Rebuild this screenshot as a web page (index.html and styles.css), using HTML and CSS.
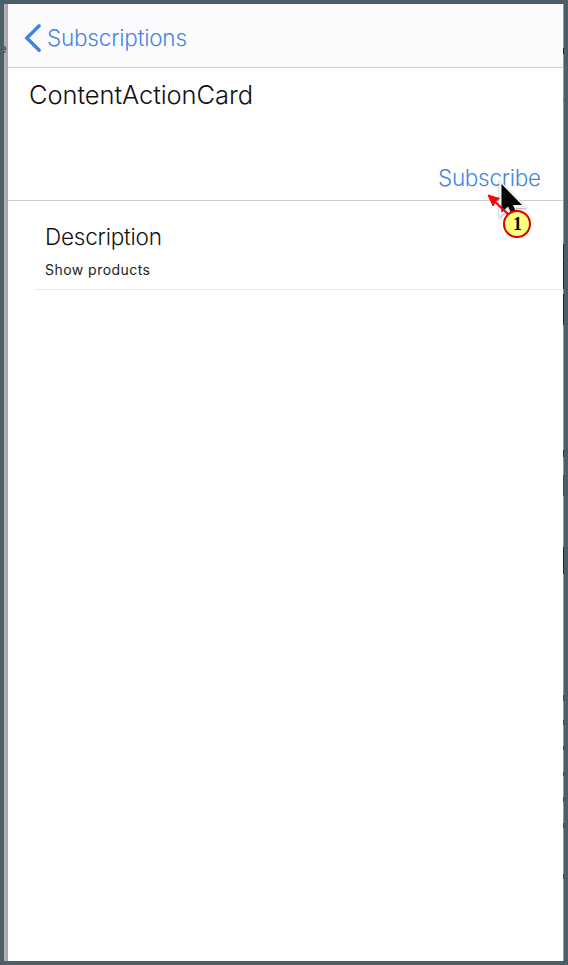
FILE: index.html
```
<!DOCTYPE html>
<html lang="en">
<head>
<meta charset="utf-8">
<title>Subscriptions</title>
<link rel="stylesheet" href="styles.css">
</head>
<body>
<div class="frame">
  <div class="edge-left"><span class="peek">e</span></div>
  <main class="screen">
    <nav class="nav">
      <svg class="chevron" width="18" height="30" viewBox="0 0 18 30"><path d="M15.2 2.7 2.8 15 15.2 27.3" fill="none" stroke="#3f82e8" stroke-width="3.4" stroke-linecap="round" stroke-linejoin="miter"/></svg>
      <svg class="label" width="150" height="36"><text x="0" y="25" textLength="140">Subscriptions</text></svg>
    </nav>
    <header class="card">
      <svg class="title" width="240" height="40"><text x="0" y="28" textLength="224">ContentActionCard</text></svg>
      <svg class="subscribe" width="104" height="36"><text x="1" y="24" textLength="103">Subscribe</text></svg>
    </header>
    <section class="details">
      <svg class="heading" width="140" height="34"><text x="0" y="24" textLength="117">Description</text></svg>
      <svg class="body" width="140" height="24"><text x="0" y="20" textLength="105">Show products</text></svg>
    </section>
  </main>
  <div class="edge-right"></div>
</div>
<svg class="annotation" width="60" height="70" viewBox="0 0 60 70">
  <path class="pointer-edge" d="M18 2.5V41l7.5-7 6 12 8-4-5-11h12z"/>
  <path d="M20.5 7v28.5l6.5-6 7 14 3.5-3-5.5-12.500h9z" fill="#050505"/>
  <path d="M10 21 29 39" stroke="#f00" stroke-width="2.2"/>
  <path d="M7 18 18.500 21.5 14.5 24.5 12 29z" fill="#f00" stroke="#f00"/>
  <circle cx="36" cy="47" r="13" fill="#ffff80" stroke="#e00000" stroke-width="2"/>
  <text class="step" x="36.5" y="53" text-anchor="middle">1</text>
</svg>
</body>
</html>
```
FILE: styles.css
```
* { box-sizing: border-box; }
body { margin: 0; font-family: Inter, "Liberation Sans", sans-serif; color: #111; }
svg { display: block; overflow: visible; }
.frame { width: 568px; height: 965px; border: 4px solid #4b5f69; display: flex; background: #fff; }
.edge-left { width: 4px; overflow: hidden; background: linear-gradient(90deg, #b5b5ba, #a3a3a8); padding-top: 37px; }
.peek { display: block; font-size: 11px; line-height: 16px; margin-left: -4px; color: #222; }
.screen { flex: 1; min-width: 0; }
.nav { height: 64px; background: #fcfcff; border-bottom: 1px solid #cfd0d4; display: flex; padding: 19px 0 0 16px; }
.label { margin: -2px 0 0 5px; }
.label text, .subscribe text { font-size: 22.5px; font-weight: 360; fill: #4686df; }
.card { height: 133px; border-bottom: 1px solid #cfcfcf; padding: 8px 22px 0 21px; }
.title text { font-size: 25.5px; font-weight: 360; fill: #111; }
.subscribe { margin: 46px 0 0 auto; }
.details { height: 89px; margin-left: 26px; padding: 20px 0 0 11px; border-bottom: 1px solid #ebebeb; }
.heading text { font-size: 22.5px; font-weight: 360; fill: #111; }
.body text { font-size: 14px; font-weight: 400; fill: #222; }
.edge-right {
  width: 1px;
  background: linear-gradient(#929a9e 0 44px, #222 44px 50px, #929a9e 50px 96px, #555 96px 97px, #929a9e 97px 240px, #17262d 240px 256px, #24577a 256px 257px, #17262d 257px 285px, #8b8f92 285px 290px, #17262d 290px 321px, #929a9e 321px 446px, #333 446px 453px, #929a9e 453px 471px, #285474 471px 492px, #929a9e 492px 543px, #202a2f 543px 570px, #929a9e 570px 691px, #444 691px 697px, #929a9e 697px 716px, #444 716px 721px, #929a9e 721px 742px, #444 742px 746px, #929a9e 746px 768px, #444 768px 772px, #929a9e 772px 793px, #444 793px 798px, #929a9e 798px 819px, #444 819px 824px, #929a9e 824px 870px, #444 870px 875px, #929a9e 875px);
}
.annotation { position: absolute; left: 481px; top: 177px; }
.pointer-edge { fill: #f3f3f3; filter: drop-shadow(0 1px 1px rgba(0, 0, 0, .35)); }
.step { font: bold 18px "Liberation Serif", serif; fill: #050505; }
```
